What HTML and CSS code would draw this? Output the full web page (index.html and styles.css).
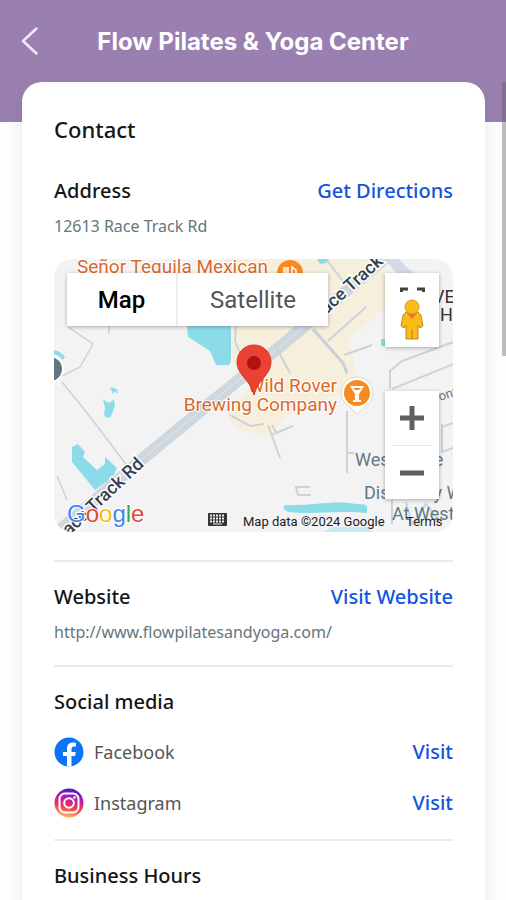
FILE: index.html
```html
<!DOCTYPE html>
<html lang="en">
<head>
    <meta charset="UTF-8">
    <meta name="viewport" content="width=device-width, initial-scale=1.0">
    <title>Flow Pilates &amp; Yoga Center</title>
    <link rel="stylesheet" href="styles.css">
</head>
<body>

    <header class="top-bar">
        <button class="back-button" aria-label="Back">
            <svg width="18" height="30" viewBox="0 0 18 30"><path d="M15.500 2.500L2 15l13.500 12.500" fill="none" stroke="#f3e9f7" stroke-width="2.500" stroke-linecap="round" stroke-linejoin="round"/></svg>
        </button>
        <h1>Flow Pilates &amp; Yoga Center</h1>
    </header>

    <main class="card">
        <h2>Contact</h2>

        <!-- Address and map -->
        <section class="section first">
            <div class="row">
                <h3>Address</h3>
                <a href="#directions">Get Directions</a>
            </div>
            <p class="detail">12613 Race Track Rd</p>

            <div class="map">
                <svg class="map-canvas" viewBox="0 0 399 273" preserveAspectRatio="xMidYMid slice">
                    <rect width="399" height="273" fill="#f3f3f4"/>
                    <!-- commercial areas -->
                    <path d="M170 0h156l10 36-8 16-34 28 8 32-6 22-44 12-24 14-10 16-32-4-14-14 24-30-20-30V60z" fill="#f6efdc"/>
                    <!-- water -->
                    <g fill="#8cdbe9">
                        <path d="M133 66h44v36l-2 4h-13l-6-14-22-14z"/>
                        <path d="M49 140l5 4 6-3 1 5-4 12-4 1-3-3 1-7z"/>
                        <path d="M56 128l7 2 1 5-3-3-2 3z"/>
                        <path d="M18 188l6-3 7 8-2 5 14 13 8-6V198l12 11-4 9-18 13-23-28z"/>
                        <path d="M231 246c25 1 44-4 64-2 10 2 18 0 18 4v6c-30-3-55 2-78-1-5-1-7-5-4-7z"/>
                        <path d="M327 80h6v7h-6zM263 0h12l-3 4-6 1z"/>
                        <path d="M0 91c5 1 9 4 11 7l-2 3c-3-3-5-5-9-6z"/>
                    </g>
                    <path d="M278 268h36l4 5h-48z" fill="#c8eaf1"/>
                    <!-- Race Track Rd -->
                    <g fill="none">
                        <path d="M-8 283L93 196 160 141 228 86 342-10" stroke="#ced7de" stroke-width="12"/>
                        <path d="M-8 283L93 196 160 141 228 86 342-10" stroke="#e1e7ea" stroke-width="1"/>
                        <path d="M338 0c8 10 12 15 33 27" stroke="#d3dae7" stroke-width="11"/>
                    </g>
                    <!-- small roads -->
                    <g fill="none" stroke="#cdd2da" stroke-width="2">
                        <path d="M14 68l25 17-13 23-18 9M8 123l26 32 40 53M3 217l10 24M55 66v9" stroke-width="1.500"/>
                        <path d="M182 66l-1 16 5 12M274 82l38-34M290 96l28-10M222 88l14 26"/>
                        <path d="M259 70l30 34 4 10" stroke="#c6cfda" stroke-width="3"/>
                        <path d="M272 0l26 34M336 130v-18l12-10 54-20M338 130l64-26M293 152v62M293 194h7"/>
                        <path d="M214 166l12 33M217 176l22-9M218 166l5 9M176 156l20 11 14-2M256 228h-14l2 8h13M388 165v28l11-4M388 168l11-4"/>
                        <path d="M338 241v24M352 243l6 22 14-20 14 18"/>
                    </g>
                    <g class="road-label">
                        <text transform="translate(15 277) rotate(-43)">ace Track Rd</text>
                        <text transform="translate(272 56) rotate(-42)">uce Track</text>
                    </g>
                    <!-- places -->
                    <g class="place-label">
                        <text x="23" y="14">Señor Tequila Mexican</text>
                        <text x="283" y="133" text-anchor="end">Wild Rover</text>
                        <text x="283" y="152" text-anchor="end">Brewing Company</text>
                    </g>
                    <g class="area-label">
                        <text x="301" y="207">Westchase</text>
                        <text x="310" y="240">Discovery W</text>
                        <text x="338" y="261">At West</text>
                        <text class="dark-label" x="379" y="44">VE</text>
                        <text class="dark-label" x="386" y="62">Ho</text>
                        <text class="small-label" transform="translate(386 142) rotate(-18)">ont</text>
                    </g>
                    <circle cx="236" cy="14" r="13" fill="#fa8a20"/>
                    <path d="M230 8v7M232 8v7M234 8v7M238 15V8l4 3v4" stroke="#fff" stroke-width="1.500" fill="none"/>
                    <circle cx="-4" cy="110" r="14" fill="#fff"/>
                    <circle cx="-4" cy="110" r="12" fill="#637581"/>
                    <g>
                        <path d="M303 118a16 16 0 0 1 16 16c0 10-9 13-16 21-7-8-16-11-16-21a16 16 0 0 1 16-16z" fill="#fff" stroke="#d8d8d8"/>
                        <circle cx="303" cy="134" r="13" fill="#fa8a20"/>
                        <path d="M296 127h14l-5 8v6h2v2h-8v-2h2v-6zM299 129l2 2h4l2-2z" fill="#fff" fill-rule="evenodd"/>
                    </g>
                    <path d="M200 86a17 17 0 0 1 17 17c0 13-13 17-17 33-4-16-17-20-17-33a17 17 0 0 1 17-17z" fill="#ea4335" stroke="#d6362a"/>
                    <circle cx="200" cy="104" r="7" fill="#b31412"/>
                    <!-- logo and attribution -->
                    <g class="google">
                        <text x="13" y="263"><tspan fill="#4285f4">G</tspan><tspan fill="#ea4335">o</tspan><tspan fill="#fbbc05">o</tspan><tspan fill="#4285f4">g</tspan><tspan fill="#34a853">l</tspan><tspan fill="#ea4335">e</tspan></text>
                    </g>
                    <g transform="translate(154 254)">
                        <rect width="19" height="13" rx="1" fill="#333"/>
                        <path d="M2 2.500h15M2 5.500h15M2 8.500h15" stroke="#eee" stroke-width="2" stroke-dasharray="2 1"/>
                        <path d="M5 11h9" stroke="#eee" stroke-width="1"/>
                    </g>
                    <g class="credits">
                        <text x="189" y="267">Map data ©2024 Google</text>
                        <text x="352" y="267">Terms</text>
                    </g>
                </svg>

                <!-- Map controls -->
                <div class="map-type">
                    <button class="active">Map</button>
                    <button>Satellite</button>
                </div>
                <button class="map-box pegman" aria-label="Street View">
                    <svg width="54" height="74" viewBox="0 0 54 74">
                        <path d="M16.500 19v-3H23M32 16h6.500v3" fill="none" stroke="#444" stroke-width="3"/>
                        <path d="M21 39h12l3 3 2 11-3 2-2-3v14H21V52l-2 3-3-2 2-11z" fill="#fbbc18" stroke="#b98c2c" stroke-linejoin="round"/>
                        <path d="M27 56v10" stroke="#b9881d"/>
                        <path d="M22 40h10l-5 6z" fill="#ee7034"/>
                        <circle cx="27" cy="34" r="7" fill="#fbbc18" stroke="#d09a1f"/>
                    </svg>
                </button>
                <div class="map-box zoom">
                    <button aria-label="Zoom in"><svg width="24" height="24" viewBox="0 0 24 24"><path d="M12 0v24M0 12h24" stroke="#606060" stroke-width="5"/></svg></button>
                    <button aria-label="Zoom out"><svg width="24" height="24" viewBox="0 0 24 24"><path d="M0 12h24" stroke="#606060" stroke-width="5"/></svg></button>
                </div>
            </div>
        </section>

        <!-- Website -->
        <section class="section">
            <div class="row">
                <h3>Website</h3>
                <a href="http://www.flowpilatesandyoga.com/">Visit Website</a>
            </div>
            <p class="detail">http://www.flowpilatesandyoga.com/</p>
        </section>

        <!-- Social media -->
        <section class="section social">
            <h3>Social media</h3>
            <div class="row">
                <svg width="30" height="30" viewBox="0 0 30 30">
                    <circle cx="15" cy="15" r="14.500" fill="#0c74f5"/>
                    <path d="M13 29.500V19H9v-4h4v-3.500C13 7.500 15.500 5.500 19 5.500l3 .3v3.700h-2c-2 0-2.500 1-2.500 2.500v3h4.300l-.8 4h-3.500v10.500z" fill="#fff"/>
                </svg>
                <span class="name">Facebook</span>
                <a href="#facebook">Visit</a>
            </div>
            <div class="row">
                <svg width="30" height="30" viewBox="0 0 30 30">
                    <defs>
                        <linearGradient id="insta" x1="0.600" y1="0" x2="0.400" y2="1">
                            <stop offset="0" stop-color="#4218d0"/>
                            <stop offset="0.350" stop-color="#b81cae"/>
                            <stop offset="0.650" stop-color="#f23c55"/>
                            <stop offset="1" stop-color="#ffc05c"/>
                        </linearGradient>
                    </defs>
                    <circle cx="15" cy="15" r="14.500" fill="url(#insta)"/>
                    <rect x="5.500" y="5.500" width="19" height="19" rx="5.500" fill="none" stroke="#fff" stroke-width="2"/>
                    <circle cx="15" cy="15" r="4.800" fill="none" stroke="#fff" stroke-width="2"/>
                    <circle cx="20.500" cy="9.500" r="1.300" fill="#fff"/>
                </svg>
                <span class="name">Instagram</span>
                <a href="#instagram">Visit</a>
            </div>
        </section>

        <!-- Business hours -->
        <section class="section">
            <h3>Business Hours</h3>
        </section>
    </main>

    <div class="scroll-thumb"></div>

</body>
</html>
```
FILE: styles.css
```css
* {
    box-sizing: border-box;
}

body {
    display: flex;
    flex-direction: column;
    height: 100vh;
    margin: 0;
    overflow: hidden;
    background-color: #fdfdfd;
    font-family: "Noto Sans", "Open Sans", sans-serif;
    color: #151515;
}

h1, h2, h3, p {
    margin: 0;
}

button {
    padding: 0;
    border: none;
    background: none;
    font-family: Roboto, sans-serif;
    cursor: pointer;
}

svg {
    display: block;
    flex-shrink: 0;
}

.top-bar {
    display: grid;
    grid-template-columns: 60px 1fr 60px;
    align-items: center;
    height: 122px;
    padding-bottom: 40px;
    flex-shrink: 0;
    background-color: #9a80b1;
}

.back-button {
    justify-self: center;
}

h1 {
    color: #ffffff;
    font-family: Inter, sans-serif;
    font-size: 24px;
    font-weight: 700;
    text-align: center;
    white-space: nowrap;
}

.card {
    flex: 1 0 auto;
    margin: -40px 21px 0 22px;
    padding: 33px 32px;
    border-radius: 20px;
    background-color: #ffffff;
    box-shadow: 0 6px 16px rgba(0, 0, 0, 0.08);
}

h2 {
    font-size: 22px;
    line-height: 28px;
    font-weight: 500;
}

h3 {
    font-size: 20px;
    line-height: 28px;
    font-weight: 500;
}

.section {
    padding: 21px 0;
    border-top: 2px solid #ebebeb;
}

.section.first {
    padding: 34px 0 28px;
    border-top: none;
}

.row {
    display: flex;
    align-items: center;
}

.row a {
    margin-left: auto;
    color: #1554dc;
    font-size: 20px;
    line-height: 28px;
    font-weight: 500;
    text-decoration: none;
}

.detail {
    margin-top: 9px;
    color: #66757a;
    font-size: 16px;
    line-height: 24px;
}

.social .row {
    margin-top: 21px;
}

.name {
    margin-left: 10px;
    color: #555555;
    font-size: 18px;
}

/* Map */
.map {
    position: relative;
    margin-top: 21px;
    aspect-ratio: 399 / 273;
    border-radius: 18px;
    overflow: hidden;
}

.map-canvas {
    width: 100%;
    height: 100%;
    font-family: Roboto, sans-serif;
}

.place-label {
    fill: #d9692b;
    font-size: 19px;
    stroke: #ffffff;
    stroke-width: 2px;
    paint-order: stroke;
}

.road-label {
    fill: #344150;
    font-size: 18px;
    font-weight: 500;
    stroke: #ffffff;
    stroke-width: 3px;
    paint-order: stroke;
}

.area-label {
    fill: #607985;
    font-size: 18px;
}

.dark-label {
    fill: #333333;
}

.small-label {
    fill: #777777;
    font-size: 13px;
}

.google {
    font-family: "Liberation Sans", sans-serif;
    font-size: 24px;
    font-weight: 500;
    stroke: #ffffff;
    stroke-width: 2px;
    paint-order: stroke;
}

.credits {
    fill: #222222;
    font-size: 13px;
}

.map-type {
    position: absolute;
    top: 14px;
    left: 13px;
    display: flex;
    height: 53px;
    background-color: #ffffff;
    box-shadow: 0 1px 4px rgba(0, 0, 0, 0.3);
}

.map-type button {
    width: 150px;
    color: #555555;
    font-size: 24px;
}

.map-type .active {
    width: 111px;
    border-right: 2px solid #eeeeee;
    color: #000000;
    font-weight: 500;
}

.map-box {
    position: absolute;
    right: 14px;
    width: 54px;
    background-color: #ffffff;
    box-shadow: 0 1px 4px rgba(0, 0, 0, 0.3);
}

.pegman {
    top: 14px;
}

.zoom {
    bottom: 33px;
    display: flex;
    flex-direction: column;
    align-items: center;
}

.zoom button {
    display: grid;
    place-items: center;
    width: 40px;
    height: 54px;
}

.zoom button + button {
    border-top: 1px solid #e6e6e6;
}

.scroll-thumb {
    position: absolute;
    top: 82px;
    right: 0;
    width: 4px;
    height: 274px;
    background-color: rgba(90, 90, 90, 0.4);
}
```
